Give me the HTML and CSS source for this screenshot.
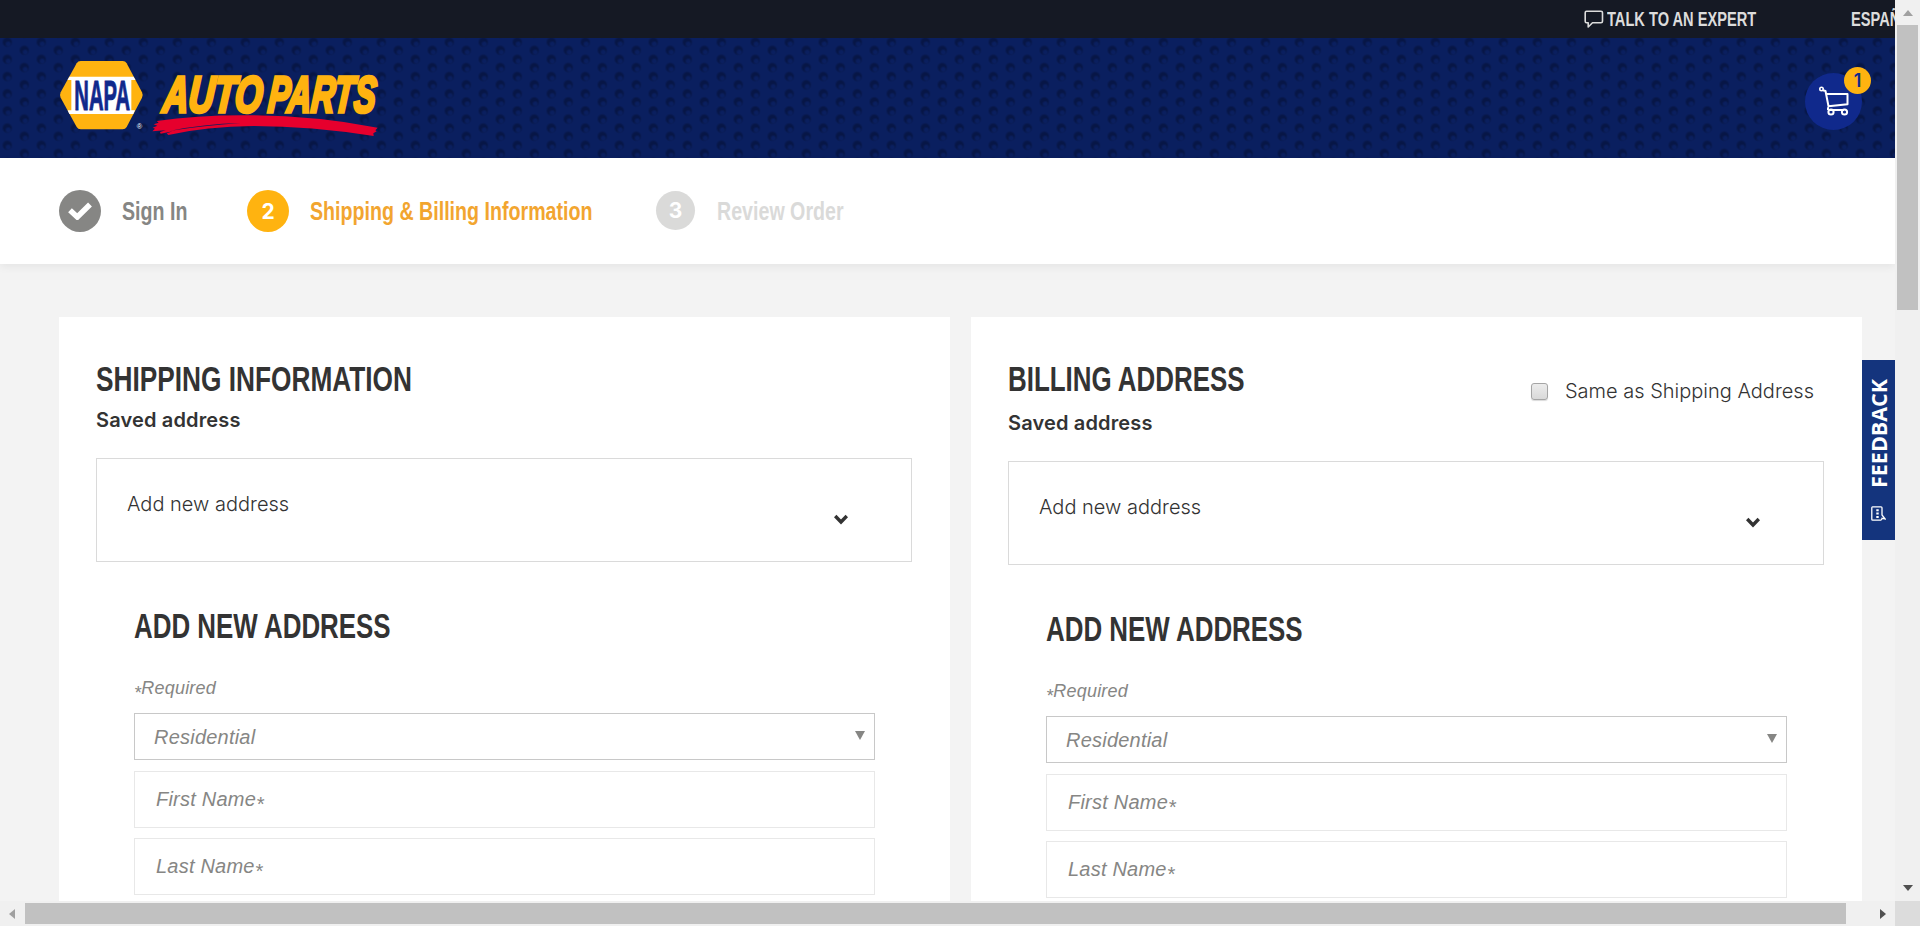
FILE: index.html
```html
<!DOCTYPE html>
<html lang="en">
<head>
<meta charset="utf-8">
<title>NAPA Auto Parts - Checkout</title>
<link rel="stylesheet" href="styles.css">
</head>
<body>
<div class="window">
  <div class="viewport">
    <div class="topbar">
      <a class="talk">
        <svg width="20" height="19" viewBox="0 0 20 19" fill="none" stroke="#dcdcdc" stroke-width="1.6" stroke-linejoin="round"><path d="M2.5 1.2h14.500q1.500 0 1.500 1.500v8.600q0 1.500-1.500 1.500H8.500l-4.300 4.200v-4.200H2.500Q1.200 12.800 1.200 11.300V2.700q0-1.500 1.300-1.500z"/></svg>
        <span class="cond top-text">TALK TO AN EXPERT</span>
      </a>
      <a class="cond top-text">ESPAÑOL</a>
    </div>
    <header class="header">
      <svg class="logo" width="323" height="77" viewBox="57 90 969 231">
        <path d="M122 93H248Q256 93 260 100L306 187Q310 195 306 203L260 291Q256 298 248 298H122Q114 298 110 291L62 203Q58 195 62 187L110 100Q114 93 122 93Z" fill="#ffb310"/>
        <path d="M88 140H281L286.500 150H274V241H285L280 252H88L83 241H94V150H82.500Z" fill="#fff"/>
        <text class="logo-napa" x="103" y="241" textLength="167" lengthAdjust="spacingAndGlyphs">NAPA</text>
        <text class="logo-reg" x="290" y="296">®</text>
        <g transform="translate(0 247) skewX(-5)">
          <text class="logo-auto" x="366" y="0" textLength="298" lengthAdjust="spacingAndGlyphs">AUTO</text>
          <text class="logo-auto" x="682" y="0" textLength="322" lengthAdjust="spacingAndGlyphs">PARTS</text>
        </g>
        <path d="M350 273Q480 254 640 256Q830 258 1013 293L1006 301L1010 304L1000 310L1001 318Q810 288 640 288Q500 289 385 315L380 310L398 304L362 311L360 306L377 301L337 304L345 296L338 293L352 287L341 283L356 278Z" fill="#e6002d"/>
        <path d="M392 302Q490 282 602 279Q490 287 392 302Z" fill="#0a1f5f"/>
      </svg>
      <a class="cart">
        <svg width="32" height="30" viewBox="0 0 32 30" fill="none" stroke="#fff" stroke-width="2" stroke-linejoin="round"><circle cx="3.500" cy="3" r="1.700" stroke-width="1.600"/><path d="M5 4.200L7.500 5L10.500 20.300L29.500 18.200V8H9M10 21.300V24M12 24H26" /><circle cx="13" cy="26" r="2.600"/><circle cx="26.500" cy="26" r="2.600"/></svg>
        <span class="badge">1</span>
      </a>
    </header>
    <nav class="steps">
      <div class="step step-done">
        <span class="dot"><svg width="24" height="18" viewBox="0 0 24 18" fill="none" stroke="#fff" stroke-width="5.500"><path d="M2 8.300L9.300 15L22 2.500"/></svg></span>
        <span class="cond step-text">Sign In</span>
      </div>
      <div class="step step-now">
        <span class="dot">2</span>
        <span class="cond step-text">Shipping &amp; Billing Information</span>
      </div>
      <div class="step step-next">
        <span class="dot">3</span>
        <span class="cond step-text">Review Order</span>
      </div>
    </nav>
    <main class="cards">
      <section class="card">
        <h2 class="cond title title-wide">SHIPPING INFORMATION</h2>
        <p class="saved">Saved address</p>
        <div class="picker"><span>Add new address</span><svg class="chev" width="14" height="11" viewBox="0 0 14 11" fill="none" stroke="#333" stroke-width="3.400"><path d="M1.200 2L7 8L12.800 2"/></svg></div>
        <div class="form">
          <h2 class="cond title">ADD NEW ADDRESS</h2>
          <p class="required"><span class="star">*</span>Required</p>
          <div class="select"><span>Residential</span><i class="caret"></i></div>
          <div class="field">First Name<span class="star">*</span></div>
          <div class="field">Last Name<span class="star">*</span></div>
        </div>
      </section>
      <section class="card card-billing">
        <div class="card-head">
          <div>
            <h2 class="cond title">BILLING ADDRESS</h2>
            <p class="saved">Saved address</p>
          </div>
          <label class="same"><span class="check"></span><span class="same-text">Same as Shipping Address</span></label>
        </div>
        <div class="picker"><span>Add new address</span><svg class="chev" width="14" height="11" viewBox="0 0 14 11" fill="none" stroke="#333" stroke-width="3.400"><path d="M1.200 2L7 8L12.800 2"/></svg></div>
        <div class="form">
          <h2 class="cond title">ADD NEW ADDRESS</h2>
          <p class="required"><span class="star">*</span>Required</p>
          <div class="select"><span>Residential</span><i class="caret"></i></div>
          <div class="field">First Name<span class="star">*</span></div>
          <div class="field">Last Name<span class="star">*</span></div>
        </div>
      </section>
    </main>
    <a class="feedback">
      <span class="feedback-text">FEEDBACK</span>
      <svg width="15" height="15" viewBox="0 0 15 15" fill="none" stroke="#fff" stroke-width="1.300"><path d="M1.500 .8H10Q11 .8 11 1.800V9L14 12.800L11 12.300Q10.800 14.200 9.800 14.200H1.700Q.8 14.200 .8 13.200V1.700Q.8 .8 1.500 .8Z"/><path d="M6.500 3.200V12" stroke-width="2.400" stroke-dasharray="2 1.400"/></svg>
    </a>
  </div>
  <div class="vbar"><i class="arrow up"></i><i class="vthumb"></i><i class="arrow down"></i></div>
  <div class="hbar"><i class="arrow left"></i><i class="hthumb"></i><i class="arrow right"></i></div>
  <div class="corner"></div>
</div>
</body>
</html>
```
FILE: styles.css
```css
* { box-sizing: border-box; }
body { margin: 0; overflow: hidden; font-family: Inter, "Liberation Sans", sans-serif; font-size: 20px; font-weight: 300; color: #333; }
h2, p { margin: 0; }
.window { display: grid; grid-template-columns: 1895px 25px; grid-template-rows: 901px 25px; width: 1920px; height: 926px; overflow: hidden; }
.viewport { position: relative; overflow: hidden; background: #f3f3f3; }

/* Condensed lettering */
.cond { display: inline-block; font-family: "Liberation Sans", Arial, sans-serif; font-weight: 700; white-space: nowrap; transform-origin: 0 50%; }

.topbar { display: flex; align-items: center; height: 38px; padding-left: 1584px; background: #151924; color: #dcdcdc; }
.talk { display: flex; flex: none; align-items: center; gap: 3px; width: 267px; }
.top-text { font-size: 19.500px; line-height: 38px; transform: scaleX(.75); }

.header {
  display: flex; justify-content: space-between; height: 120px; padding: 22px 33px 0 59px;
  background-color: #0a1f5f;
  background-image:
    radial-gradient(circle at 18px 10.600px, #0a1f5f 1.500px, transparent 3.500px),
    radial-gradient(circle at 17px 8.600px, #071646 3.500px, transparent 5.500px),
    radial-gradient(circle at 18px 10.600px, #0a1f5f 1.500px, transparent 3.500px),
    radial-gradient(circle at 17px 8.600px, #071646 3.500px, transparent 5.500px);
  background-size: 34px 17.200px;
  background-position: 7.300px 3.700px, 7.300px 3.700px, 24.300px 12.700px, 24.300px 12.700px;
}
.logo { flex: none; }
.logo-napa { font: 700 128px "Liberation Sans", sans-serif; fill: #10298c; stroke: #10298c; stroke-width: 3; }
.logo-auto { font: italic 700 152px "Liberation Sans", sans-serif; fill: #ffb310; stroke: #ffb310; stroke-width: 11; }
.logo-reg { font: 22px "Liberation Sans", sans-serif; fill: #fff; }
.cart { position: relative; display: flex; align-items: center; justify-content: center; width: 57px; height: 57px; margin: 13px 0 0; border-radius: 50%; background: #10298c; }
.cart svg { margin-bottom: 1px; }
.badge { position: absolute; top: -6px; right: -9px; width: 27px; height: 27px; border-radius: 50%; background: #ffb310; color: #10298c; font-size: 18px; font-weight: 600; line-height: 27px; text-align: center; }

.steps { position: relative; display: flex; height: 106px; padding-left: 59px; background: #fff; box-shadow: 0 3px 8px rgba(0, 0, 0, .06); }
.step { display: flex; align-items: center; flex: none; }
.dot { display: flex; flex: none; align-items: center; justify-content: center; width: 42px; height: 42px; margin-right: 21px; border-radius: 50%; color: #fff; font-size: 21px; font-weight: 700; }
.step-text { font-size: 25.500px; transform: scaleX(.77); }
.step-done { width: 188px; color: #868684; }
.step-done .dot { background: #868684; }
.step-now { width: 409px; color: #f2a52f; }
.step-now .dot { background: #ffb310; }
.step-next { color: #dadad9; }
.step-next .dot { width: 39px; height: 39px; margin: 0 22px 1px 0; background: #dadad9; }

.cards { display: flex; gap: 21px; padding: 53px 0 0 59px; }
.card { flex: none; width: 891px; height: 700px; padding: 41px 38px 0 37px; background: #fff; }
.title { display: block; width: 500px; height: 42px; font-size: 35px; line-height: 41px; transform: scaleX(.74); }
.title-wide { transform: scaleX(.75); }
.saved { height: 58px; padding-top: 7px; font-weight: 600; font-size: 20px; letter-spacing: .15px; line-height: 26px; }
.card-billing .saved { height: 61px; padding-top: 10px; }
.card-head { display: flex; justify-content: space-between; }
.same { display: flex; align-items: center; gap: 17px; height: 26px; padding-right: 10px; margin-top: 20px; }
.check { width: 17px; height: 17px; border: 1px solid #a5a5a5; border-radius: 3px; background: linear-gradient(#ececec, #d9d9d9); box-shadow: 0 1px 1px rgba(0, 0, 0, .15); }
.picker { display: flex; justify-content: space-between; height: 104px; padding: 32px 63px 0 30px; border: 1px solid #dadada; line-height: 26px; }
.chev { margin-top: 23px; }
.form { padding: 43px 37px 0 38px; }
.form .title { width: 400px; }
.required, .select, .field { font-family: "Liberation Sans", Arial, sans-serif; font-style: italic; font-weight: 400; letter-spacing: .22px; color: #868684; }
.required { height: 66px; padding-top: 28px; font-size: 18px; line-height: 26px; }
.select { display: flex; justify-content: space-between; align-items: center; height: 47px; margin-bottom: 11px; padding: 2px 9px 0 19px; border: 1px solid #c8c8c8; }
.caret { margin-top: -4px; border: 5px solid transparent; border-top: 9px solid #868684; border-bottom: 0; }
.field { height: 57px; margin-bottom: 10px; padding-left: 21px; border: 1px solid #e8e8e8; line-height: 55px; }
.star { position: relative; top: 5px; }

.feedback { position: absolute; right: 0; top: 360px; display: flex; flex-direction: column; align-items: center; width: 33px; height: 180px; padding-top: 19px; background: #14347d; color: #fff; }
.feedback-text { height: 127px; font-family: "Open Sans", "Noto Sans", sans-serif; font-size: 21.500px; font-weight: 700; line-height: 30px; writing-mode: vertical-rl; transform: rotate(180deg); text-align: right; }

.vbar { display: flex; flex-direction: column; align-items: center; padding-top: 10px; background: #f0f0f0; }
.vthumb { width: 21px; height: 285px; margin-top: 9px; background: #c1c1c1; }
.hbar { display: flex; align-items: center; padding-left: 9px; background: #f0f0f0; }
.hthumb { width: 1821px; height: 21px; margin-left: 10px; background: #c1c1c1; }
.corner { background: #dcdcdc; }
.arrow { border: 0 solid transparent; }
.up { border-width: 0 5.500px 6px; border-bottom-color: #a0a0a0; }
.down { margin-top: 575px; border-width: 6px 5.500px 0; border-top-color: #505050; }
.left { border-width: 5.500px 6px 5.500px 0; border-right-color: #a0a0a0; }
.right { margin-left: 34px; border-width: 5.500px 0 5.500px 6px; border-left-color: #505050; }
```
